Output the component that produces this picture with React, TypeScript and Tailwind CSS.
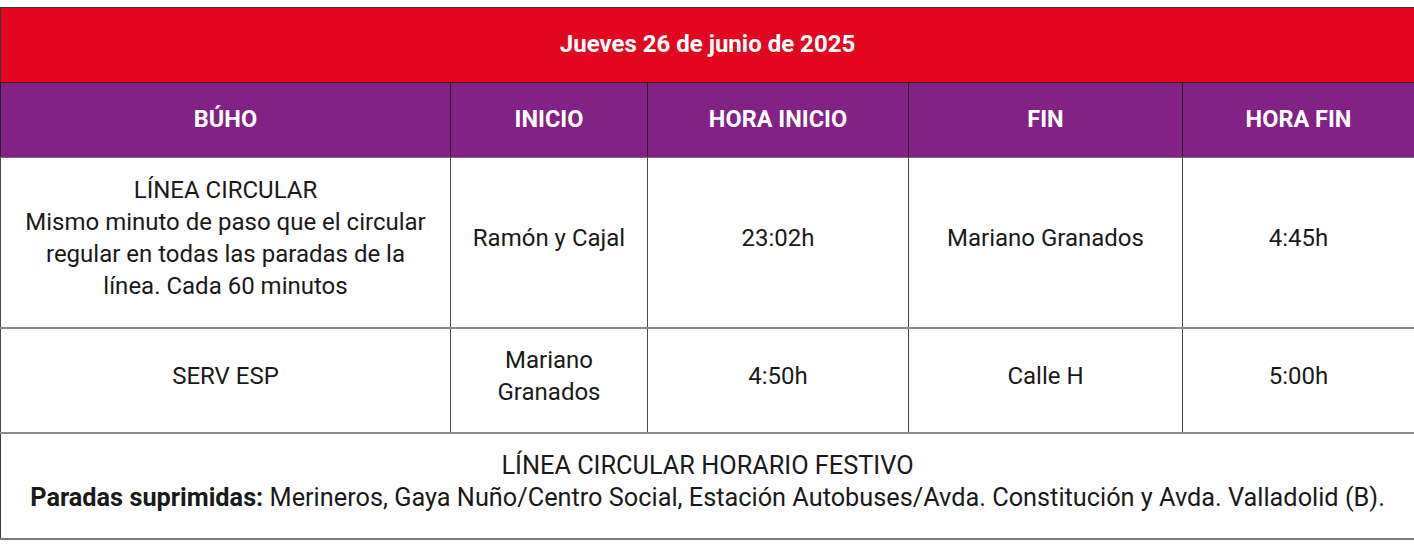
const cols = [450, 197, 261, 274, 232];

const headers = ["BÚHO", "INICIO", "HORA INICIO", "FIN", "HORA FIN"];

const cell = "border-x border-b-2 border-x-[#4a4a4a] border-b-[#8c8c8c] pb-2 text-center";

export default function App() {
  return (
    <div className="bg-white pt-[7px] font-['Roboto',sans-serif] text-[#1a1a1a]">
      <table className="w-[1414px] table-fixed border-collapse border border-[#3a3a3a]">
        <colgroup>
          {cols.map((w, i) => (
            <col key={i} style={{ width: w }} />
          ))}
        </colgroup>
        <tbody>
          <tr className="h-[75px] bg-[#e3061f]">
            <td colSpan={5} className="border-b border-[#4a1a22] pb-0.5 text-center text-[24px] font-bold text-white">
              Jueves 26 de junio de 2025
            </td>
          </tr>
          <tr className="h-[75px] bg-[#812284] text-white">
            {headers.map((h) => (
              <td key={h} className="border-x border-b border-x-[#2b1a2c] border-b-[#6d6d6d] text-center text-[23.5px] font-bold">
                {h}
              </td>
            ))}
          </tr>
          <tr className="h-[170px] text-[24px] leading-[32px]">
            <td className={`${cell} px-4`}>
              LÍNEA CIRCULAR
              <br />
              Mismo minuto de paso que el circular regular en todas las paradas de la línea. Cada 60 minutos
            </td>
            <td className={cell}>Ramón y Cajal</td>
            <td className={cell}>23:02h</td>
            <td className={cell}>Mariano Granados</td>
            <td className={cell}>4:45h</td>
          </tr>
          <tr className="h-[105px] text-[24px] leading-[32px]">
            <td className={cell}>SERV ESP</td>
            <td className={`${cell} px-10`}>Mariano Granados</td>
            <td className={cell}>4:50h</td>
            <td className={cell}>Calle H</td>
            <td className={cell}>5:00h</td>
          </tr>
          <tr className="h-[106px] text-[25.3px] leading-[32px]">
            <td colSpan={5} className="border-b-2 border-[#7a7a7a] pb-2 text-center">
              LÍNEA CIRCULAR HORARIO FESTIVO
              <br />
              <b>Paradas suprimidas:</b> Merineros, Gaya Nuño/Centro Social, Estación Autobuses/Avda. Constitución y Avda. Valladolid (B).
            </td>
          </tr>
        </tbody>
      </table>
    </div>
  );
}
